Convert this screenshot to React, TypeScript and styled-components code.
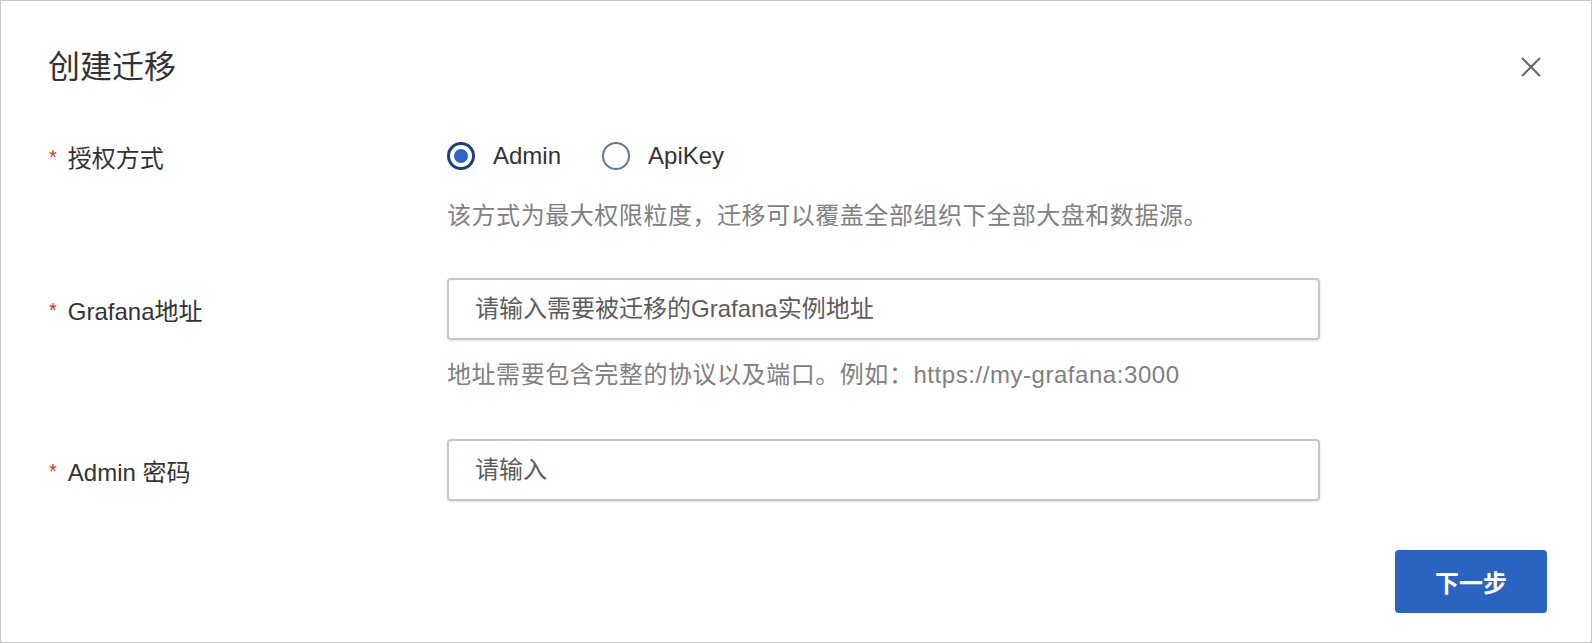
import styled, { createGlobalStyle } from "styled-components"

const GlobalStyle = createGlobalStyle`
    html, body {
        margin: 0;
        padding: 0;
        background: #fff;
    }
    body {
        font-family: "Liberation Sans", "Noto Sans CJK SC", sans-serif;
        color: #333;
    }
    * {
        box-sizing: border-box;
    }
`

interface IRadio {
    label: string,
    checked: boolean
}

interface IItem {
    label: string,
    height: number
}

const RadioOption = ({ label, checked }: IRadio) => (
    <Option>
        <Circle $checked={checked} />
        <span>{label}</span>
    </Option>
)

const FormLabel = ({ label, height }: IItem) => (
    <Label $height={height}>
        <Required>*</Required>
        {label}
    </Label>
)

export default function App() {
    return (
        <>
            <GlobalStyle />
            <Dialog>
                <Header>
                    <Title>创建迁移</Title>
                    <Close aria-label="close">
                        <svg width="20" height="20" viewBox="0 0 20 20">
                            <path d="M1 1 L19 19 M19 1 L1 19" stroke="#666" strokeWidth="2" fill="none" />
                        </svg>
                    </Close>
                </Header>

                <Form>
                    <Item>
                        <FormLabel label="授权方式" height={40} />
                        <Control>
                            <RadioGroup>
                                <RadioOption label="Admin" checked />
                                <RadioOption label="ApiKey" checked={false} />
                            </RadioGroup>
                            <Help $top={22}>该方式为最大权限粒度，迁移可以覆盖全部组织下全部大盘和数据源。</Help>
                        </Control>
                    </Item>

                    <Item $top={44}>
                        <FormLabel label="Grafana地址" height={62} />
                        <Control>
                            <Input placeholder="请输入需要被迁移的Grafana实例地址" />
                            <Help $top={17}>地址需要包含完整的协议以及端口。例如：https://my-grafana:3000</Help>
                        </Control>
                    </Item>

                    <Item $top={46}>
                        <FormLabel label="Admin 密码" height={62} />
                        <Control>
                            <Input type="password" placeholder="请输入" />
                        </Control>
                    </Item>
                </Form>

                <Footer>
                    <Primary>下一步</Primary>
                </Footer>
            </Dialog>
        </>
    )
}

const Dialog = styled.div`
    width: 100vw;
    height: 100vh;
    border: 1px solid #c8c8c8;
    display: flex;
    flex-direction: column;
    padding: 44px 44px 0 47px;
    overflow: hidden;
`

const Header = styled.div`
    height: 44px;
    display: flex;
    align-items: center;
    justify-content: space-between;
`

const Title = styled.h1`
    margin: 0;
    font-size: 32px;
    line-height: 44px;
    font-weight: 400;
    color: #333;
`

const Close = styled.button`
    width: 32px;
    height: 32px;
    padding: 0;
    border: none;
    background: transparent;
    display: flex;
    align-items: center;
    justify-content: center;
    cursor: pointer;
`

const Form = styled.div`
    margin-top: 47px;
    display: flex;
    flex-direction: column;
`

const Item = styled.div<{ $top?: number }>`
    display: flex;
    align-items: flex-start;
    margin-top: ${({ $top }) => $top || 0}px;
`

const Label = styled.div<{ $height: number }>`
    width: 399px;
    height: ${({ $height }) => $height}px;
    display: flex;
    align-items: center;
    font-size: 24px;
    color: #333;
    white-space: pre;
`

const Required = styled.span`
    color: #c6362c;
    font-size: 20px;
    margin-left: 1px;
    margin-right: 11px;
    position: relative;
    top: 1px;
`

const Control = styled.div`
    display: flex;
    flex-direction: column;
`

const RadioGroup = styled.div`
    height: 40px;
    display: flex;
    align-items: center;
`

const Option = styled.label`
    display: flex;
    align-items: center;
    gap: 18px;
    margin-right: 41px;
    font-size: 24px;
    color: #333;
    cursor: pointer;
`

const Circle = styled.span<{ $checked: boolean }>`
    width: 28px;
    height: 28px;
    border-radius: 50%;
    border: ${({ $checked }) => ($checked ? "3px solid #1f407c" : "2px solid #62799c")};
    display: flex;
    align-items: center;
    justify-content: center;
    background: #fff;

    &::after {
        content: "";
        width: 14px;
        height: 14px;
        border-radius: 50%;
        background: #2d66c6;
        display: ${({ $checked }) => ($checked ? "block" : "none")};
    }
`

const Help = styled.div<{ $top: number }>`
    margin-top: ${({ $top }) => $top}px;
    font-size: 24px;
    line-height: 36px;
    letter-spacing: 0.55px;
    color: #808080;
    white-space: nowrap;
`

const Input = styled.input`
    width: 873px;
    height: 62px;
    border: 2px solid #c5c7cc;
    border-radius: 4px;
    padding: 0 26px;
    font-family: inherit;
    font-size: 24px;
    color: #333;
    outline: none;
    box-shadow: 0 1px 3px rgba(0, 0, 0, 0.12);

    &::placeholder {
        color: #5c5c5c;
    }
`

const Footer = styled.div`
    margin-top: 49px;
    display: flex;
    justify-content: flex-end;
`

const Primary = styled.button`
    width: 152px;
    height: 63px;
    border: none;
    border-radius: 4px;
    background: #2b63c1;
    color: #fff;
    font-family: inherit;
    font-size: 24px;
    font-weight: 600;
    cursor: pointer;
`
